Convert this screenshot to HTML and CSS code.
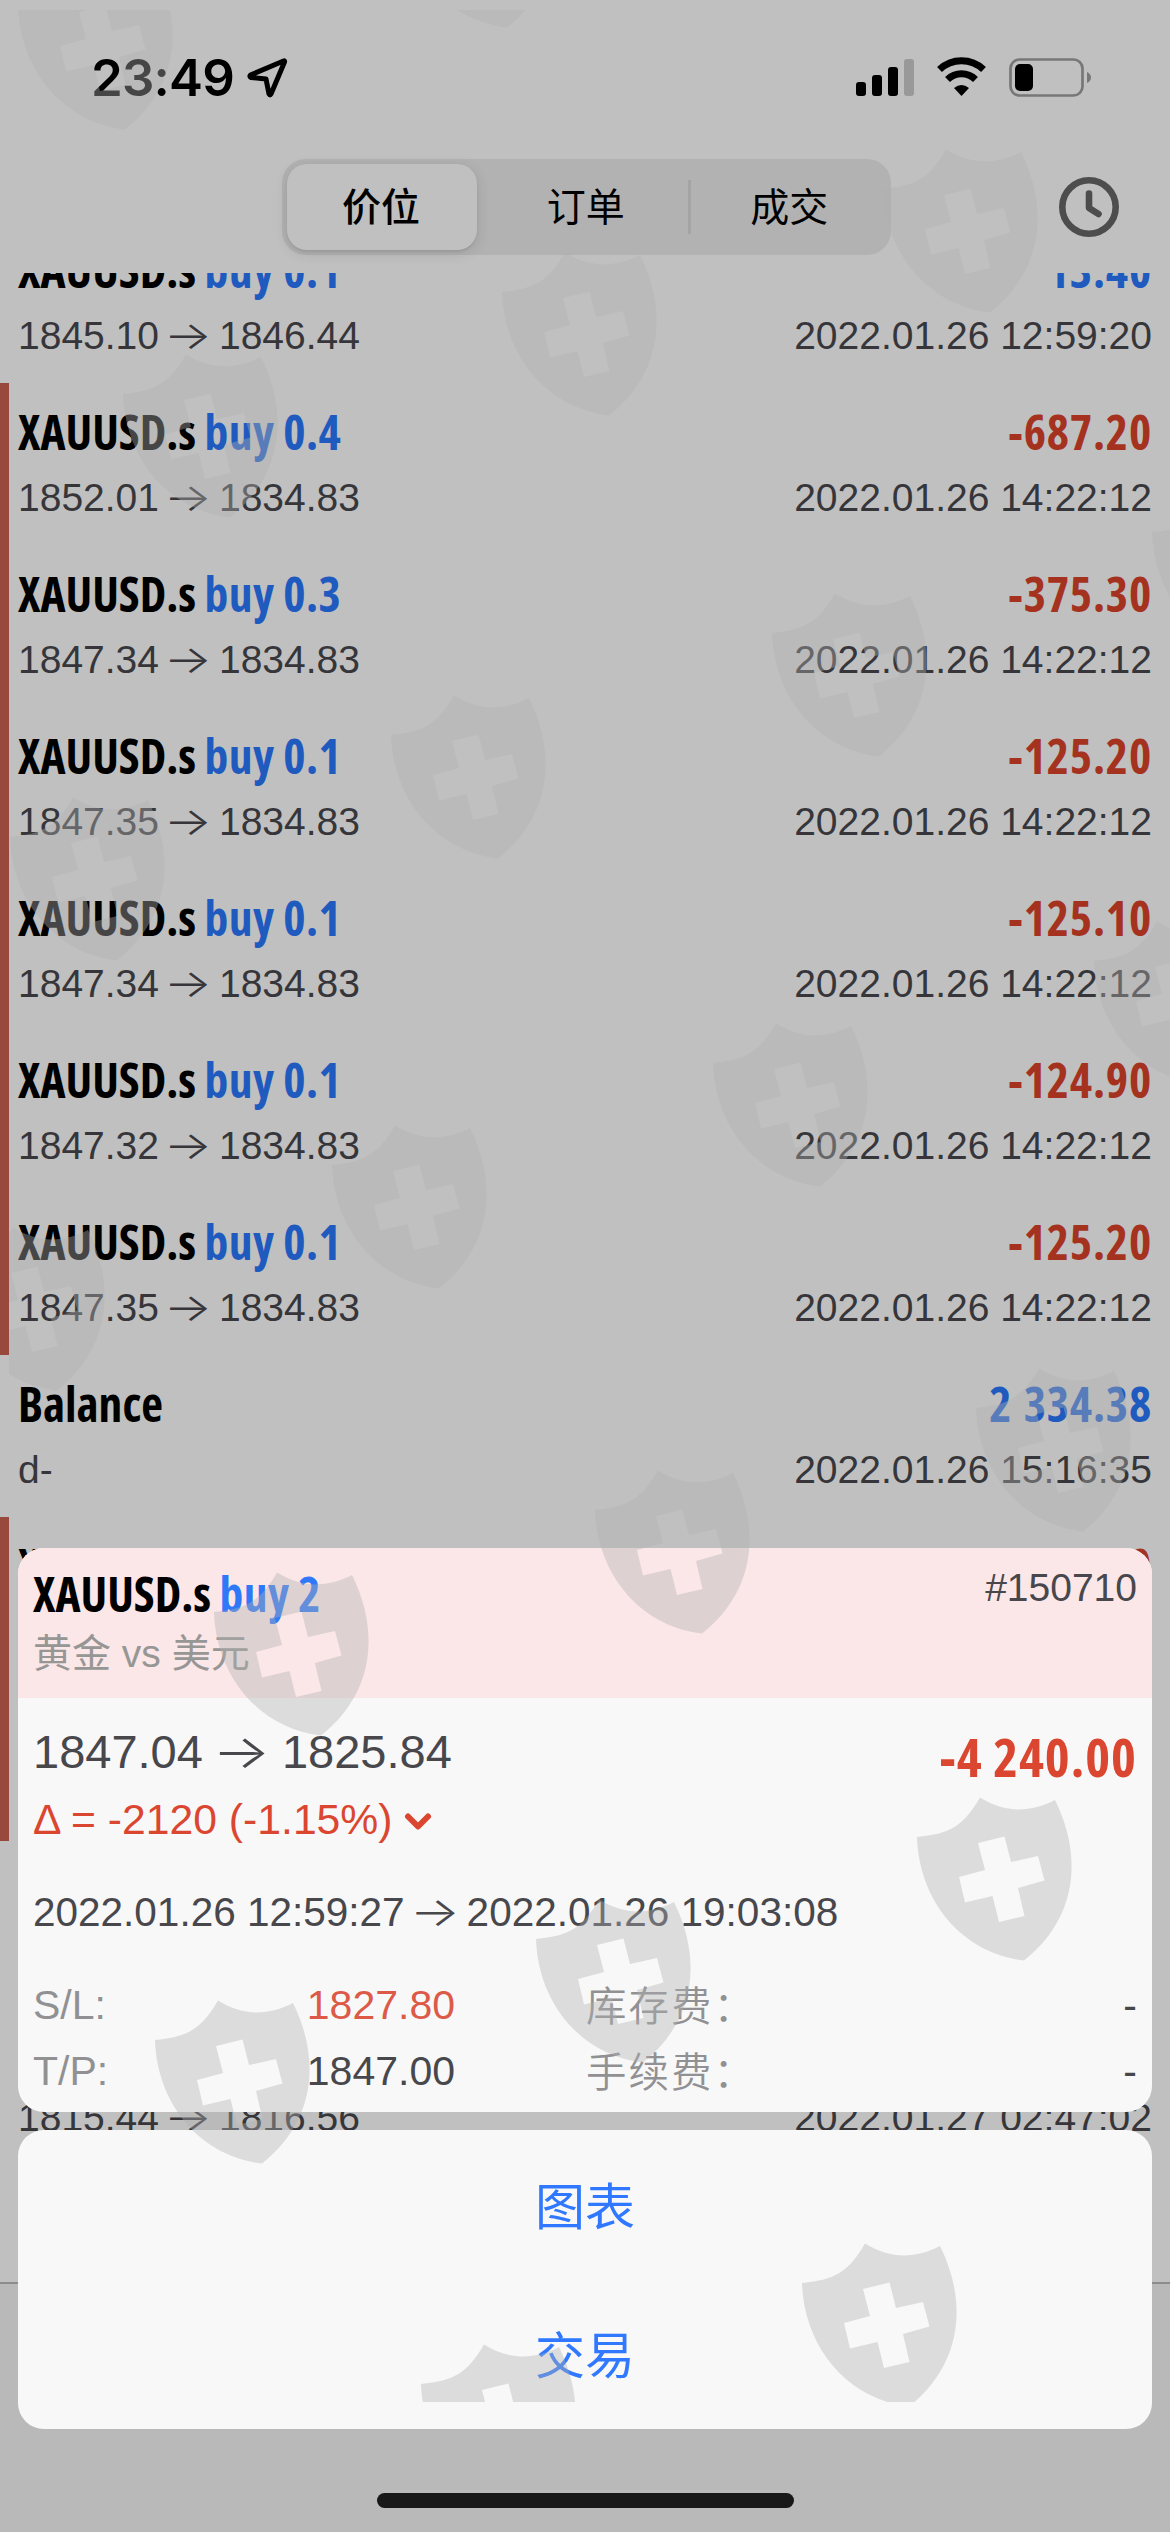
FILE: index.html
```html
<!DOCTYPE html>
<html lang="zh-CN">

<head>
    <meta charset="UTF-8">
    <link rel="stylesheet" href="styles.css">
    <title>成交</title>
</head>

<body>
    <div id="screen">
        <div id="header">
            <div class="status">
                <div class="clock">23:49
                    <svg width="42" height="42" viewBox="0 0 42 42"><path d="M36.500 4 L3.500 18 Q2 19.500 4 20.500 L19 22 L22 37 Q23 39 24 37 L37.500 5 Q38 3.500 36.500 4 Z" fill="none" stroke="#000" stroke-width="5" stroke-linejoin="round"/></svg>
                </div>
                <svg class="indicators" width="240" height="42" viewBox="0 0 240 42">
                    <rect x="1" y="25" width="10" height="14" rx="3"/>
                    <rect x="17" y="18" width="10" height="21" rx="3"/>
                    <rect x="33" y="10" width="10" height="29" rx="3"/>
                    <rect x="49" y="2" width="10" height="37" rx="3" fill="#999"/>
                    <path d="M84.500 12.500 A32 32 0 0 1 128.500 12.500" fill="none" stroke="#000" stroke-width="7"/>
                    <path d="M92.500 22.500 A20 20 0 0 1 120.500 22.500" fill="none" stroke="#000" stroke-width="7"/>
                    <path d="M99 31 Q106.500 25 114 31 L106.500 39 Z"/>
                    <rect x="155.500" y="2.500" width="72" height="36" rx="9" fill="none" stroke="#777" stroke-width="2.700"/>
                    <rect x="160" y="7" width="18" height="27" rx="5"/>
                    <path d="M232 15 Q236 17 236 20.500 Q236 24 232 26 Z" fill="#777"/>
                </svg>
            </div>
            <div class="nav">
                <div class="tabs">
                    <span class="tab on">价位</span>
                    <span class="tab">订单</span>
                    <span class="tab">成交</span>
                </div>
                <svg class="history" width="60" height="60" viewBox="0 0 60 60"><circle cx="30" cy="30" r="26.700" /><path d="M30 16.500 V31 L39.500 37"/></svg>
            </div>
        </div>

        <div id="list">
            <div class="row">
                <div class="line1"><b>XAUUSD.s <i>buy 0.1</i></b><b class="plus">13.40</b></div>
                <div class="line2"><span>1845.10<em>→</em>1846.44</span><span>2022.01.26 12:59:20</span></div>
            </div>
            <div class="row loss">
                <div class="line1"><b>XAUUSD.s <i>buy 0.4</i></b><b class="minus">-687.20</b></div>
                <div class="line2"><span>1852.01<em>→</em>1834.83</span><span>2022.01.26 14:22:12</span></div>
            </div>
            <div class="row loss">
                <div class="line1"><b>XAUUSD.s <i>buy 0.3</i></b><b class="minus">-375.30</b></div>
                <div class="line2"><span>1847.34<em>→</em>1834.83</span><span>2022.01.26 14:22:12</span></div>
            </div>
            <div class="row loss">
                <div class="line1"><b>XAUUSD.s <i>buy 0.1</i></b><b class="minus">-125.20</b></div>
                <div class="line2"><span>1847.35<em>→</em>1834.83</span><span>2022.01.26 14:22:12</span></div>
            </div>
            <div class="row loss">
                <div class="line1"><b>XAUUSD.s <i>buy 0.1</i></b><b class="minus">-125.10</b></div>
                <div class="line2"><span>1847.34<em>→</em>1834.83</span><span>2022.01.26 14:22:12</span></div>
            </div>
            <div class="row loss">
                <div class="line1"><b>XAUUSD.s <i>buy 0.1</i></b><b class="minus">-124.90</b></div>
                <div class="line2"><span>1847.32<em>→</em>1834.83</span><span>2022.01.26 14:22:12</span></div>
            </div>
            <div class="row loss">
                <div class="line1"><b>XAUUSD.s <i>buy 0.1</i></b><b class="minus">-125.20</b></div>
                <div class="line2"><span>1847.35<em>→</em>1834.83</span><span>2022.01.26 14:22:12</span></div>
            </div>
            <div class="row">
                <div class="line1"><b>Balance</b><b class="plus">2 334.38</b></div>
                <div class="line2"><span>d-</span><span>2022.01.26 15:16:35</span></div>
            </div>
            <div class="row loss">
                <div class="line1"><b>X</b><b class="minus">0</b></div>
            </div>
            <div class="row loss"></div>
            <div class="row"></div>
            <div class="row">
                <div class="line1"></div>
                <div class="line2"><span>1815.44<em>→</em>1816.56</span><span>2022.01.27 02:47:02</span></div>
            </div>
        </div>
        <div id="footer"></div>

        <!-- 订单详情 -->
        <div id="sheet">
            <div class="card">
                <div class="card-head">
                    <div class="line1"><b>XAUUSD.s <i>buy 2</i></b><span class="ticket">#150710</span></div>
                    <p>黄金 vs 美元</p>
                </div>
                <div class="card-body">
                    <div class="price"><span>1847.04<em>→</em>1825.84</span><b>-4 240.00</b></div>
                    <div class="delta">Δ = -2120 (-1.15%)<svg width="28" height="20" viewBox="0 0 28 20"><path d="M4 4.500 L14 14.500 L24 4.500" fill="none" stroke="#db4630" stroke-width="6" stroke-linecap="round" stroke-linejoin="round"/></svg></div>
                    <div class="period">2022.01.26 12:59:27<em>→</em>2022.01.26 19:03:08</div>
                    <div class="info">
                        <span>S/L:</span><span class="val red">1827.80</span><span class="fee">库存费：</span><span class="val">-</span>
                        <span>T/P:</span><span class="val">1847.00</span><span class="fee">手续费：</span><span class="val">-</span>
                    </div>
                </div>
            </div>
            <div class="actions">
                <a>图表</a>
                <a>交易</a>
            </div>
        </div>

        <div class="home"></div>

        <!-- 盾牌水印 -->
        <svg class="watermark" width="1161" height="2392" viewBox="9 10 1161 2392">
            <defs>
                <path id="shield" fill-rule="evenodd" d="M0 0 C34 -3 47 -12 63 -39.500 C88 -24 113 -24 138 -37 C168 24 157 84 107 123.500 C44 116 2 63 0 0 Z M61 6 L87.500 -0.500 L94 25 L121 19 L127.500 43.500 L101 51 L107.500 79 L82 85 L75.500 59 L48 65.500 L42 40 L68 33 Z"/>
            </defs>
            <use href="#shield" x="18" y="6"/>
            <use href="#shield" x="400" y="-96"/>
            <use href="#shield" x="123" y="394"/>
            <use href="#shield" x="502" y="292"/>
            <use href="#shield" x="883" y="189"/>
            <use href="#shield" x="10" y="837"/>
            <use href="#shield" x="391" y="735"/>
            <use href="#shield" x="772" y="633"/>
            <use href="#shield" x="1152" y="532"/>
            <use href="#shield" x="-50" y="1267"/>
            <use href="#shield" x="332" y="1165"/>
            <use href="#shield" x="713" y="1063"/>
            <use href="#shield" x="1094" y="961"/>
            <use href="#shield" x="214" y="1612"/>
            <use href="#shield" x="595" y="1510"/>
            <use href="#shield" x="976" y="1408"/>
            <use href="#shield" x="155" y="2040"/>
            <use href="#shield" x="536" y="1939"/>
            <use href="#shield" x="917" y="1837"/>
            <use href="#shield" x="421" y="2384"/>
            <use href="#shield" x="802" y="2283"/>
        </svg>
    </div>
</body>

</html>
```
FILE: styles.css
```css
@charset "UTF-8";

/* ========BASIC======== */
body {
    margin: 0;
    font-family: "Liberation Sans", "Noto Sans CJK SC", sans-serif;
    font-size: 39px;
    color: #36363a;
    background: #c0c0c0;
}

b {
    font-family: "Open Sans", sans-serif;
    font-size: 47.5px;
    font-weight: 700;
    font-stretch: 75%;
    color: #000;
    white-space: pre;
}

i {
    font-style: normal;
    letter-spacing: 0.4px;
    color: #1f5abf;
}

em {
    display: inline-block;
    width: 60px;
    font-family: "Inter", sans-serif;
    font-style: normal;
    font-weight: 300;
    line-height: 1;
    text-align: center;
    transform: translateX(-1px) scaleX(1.3);
}

#screen {
    position: relative;
    width: 1170px;
    height: 2532px;
    overflow: hidden;
}


/* ========HEADER======== */
#header {
    height: 273px;
}

.status {
    display: flex;
    justify-content: space-between;
    height: 102px;
    padding: 57px 75px 0 91px;
    box-sizing: border-box;
}

.clock {
    display: flex;
    gap: 13px;
    font-family: "Inter", sans-serif;
    font-size: 51px;
    font-weight: 600;
    line-height: 42px;
    letter-spacing: -0.8px;
    color: #000;
}

.nav {
    display: flex;
    align-items: center;
    justify-content: space-between;
    margin: 57px 51px 0 282px;
}

.tabs {
    display: flex;
    width: 609px;
    height: 96px;
    padding: 5px 0 5px 5px;
    box-sizing: border-box;
    border-radius: 24px;
    background: #b2b2b2;
}

.tab {
    flex: 1;
    line-height: 87px;
    text-align: center;
    color: #000;
}

.tab.on {
    flex: 0 0 188px;
    height: 86px;
    padding-right: 2px;
    margin-right: 7px;
    font-weight: 500;
    border-radius: 20px;
    background: #c0c0c0;
    box-shadow: 0 3px 14px rgba(0, 0, 0, 0.12), 0 2px 2px rgba(0, 0, 0, 0.06);
}

.tab:last-child {
    background: linear-gradient(#a4a4a4, #a4a4a4) 0 50% / 3px 54px no-repeat;
}

.history {
    fill: none;
    stroke: #4d4d4d;
    stroke-width: 6.6;
    stroke-linecap: round;
    stroke-linejoin: round;
}


/* ========LIST======== */
#list {
    display: flex;
    flex-direction: column;
    justify-content: flex-end;
    height: 1892px;
    overflow: hidden;
}

.row {
    flex: none;
    height: 162px;
    padding: 19px 18px 0;
    box-sizing: border-box;
}

.row.loss {
    padding-left: 9px;
    border-left: 9px solid #99483e;
}

.line1,
.line2 {
    display: flex;
    justify-content: space-between;
}

.line1 {
    height: 60px;
    line-height: 60px;
}

.line2 {
    margin-top: 11px;
    line-height: 50px;
}

.plus,
.minus {
    letter-spacing: 0.8px;
}

.plus {
    word-spacing: 2px;
    color: #1f5abf;
}

.minus {
    color: #a5321f;
}

#footer {
    height: 249px;
    margin-top: 117px;
    border-top: 2px solid #8c8c8c;
    background: #b9b9b9;
}


/* ========SHEET======== */
#sheet {
    position: absolute;
    top: 1548px;
    left: 18px;
    width: 1134px;
}

.card,
.actions {
    border-radius: 26px;
    background: #f8f8f8;
    overflow: hidden;
}

.card {
    height: 564px;
    color: #47474c;
}

.card-head {
    height: 150px;
    padding: 16px 15px 0;
    box-sizing: border-box;
    background: #fbe6e8;
}

.card i {
    color: #2f78f8;
}

.ticket {
    line-height: 48px;
}

.card-head p {
    margin: 0;
    line-height: 60px;
    color: #969694;
}

.card-body {
    padding: 24px 15px 0;
}

.price {
    display: flex;
    justify-content: space-between;
    height: 60px;
    line-height: 60px;
    font-size: 47px;
}

.price em {
    width: 79px;
}

.price b {
    font-size: 53px;
    line-height: 69px;
    letter-spacing: 1px;
    color: #db4630;
}

.delta {
    margin-top: 11px;
    line-height: 52px;
    font-size: 42.700px;
    color: #db4630;
}

.delta svg {
    margin-left: 11px;
    vertical-align: 2px;
}

.period {
    margin-top: 41px;
    line-height: 52px;
    font-size: 40.500px;
    white-space: nowrap;
}

.period em {
    width: 62px;
}

.info {
    display: grid;
    grid-template-columns: 120px 302px 1fr 100px;
    margin-top: 34px;
    font-size: 41px;
    line-height: 66px;
    color: #919194;
}

.val {
    text-align: right;
    color: #47474c;
}

.val.red {
    color: #dc5a47;
}

.fee {
    padding-left: 131px;
    font-family: "Noto Sans CJK SC", sans-serif;
    font-size: 40.500px;
    font-weight: 350;
    line-height: 63px;
    letter-spacing: 2px;
}

.actions {
    height: 299px;
    margin-top: 18px;
}

.actions a {
    display: block;
    height: 149px;
    line-height: 157px;
    font-size: 50px;
    text-align: center;
    color: #2f78ff;
}

.home {
    position: absolute;
    left: 377px;
    top: 2493px;
    width: 417px;
    height: 15px;
    border-radius: 8px;
    background: #181818;
}

.watermark {
    position: absolute;
    top: 10px;
    left: 9px;
    fill: rgba(177, 177, 177, 0.395);
}
```
